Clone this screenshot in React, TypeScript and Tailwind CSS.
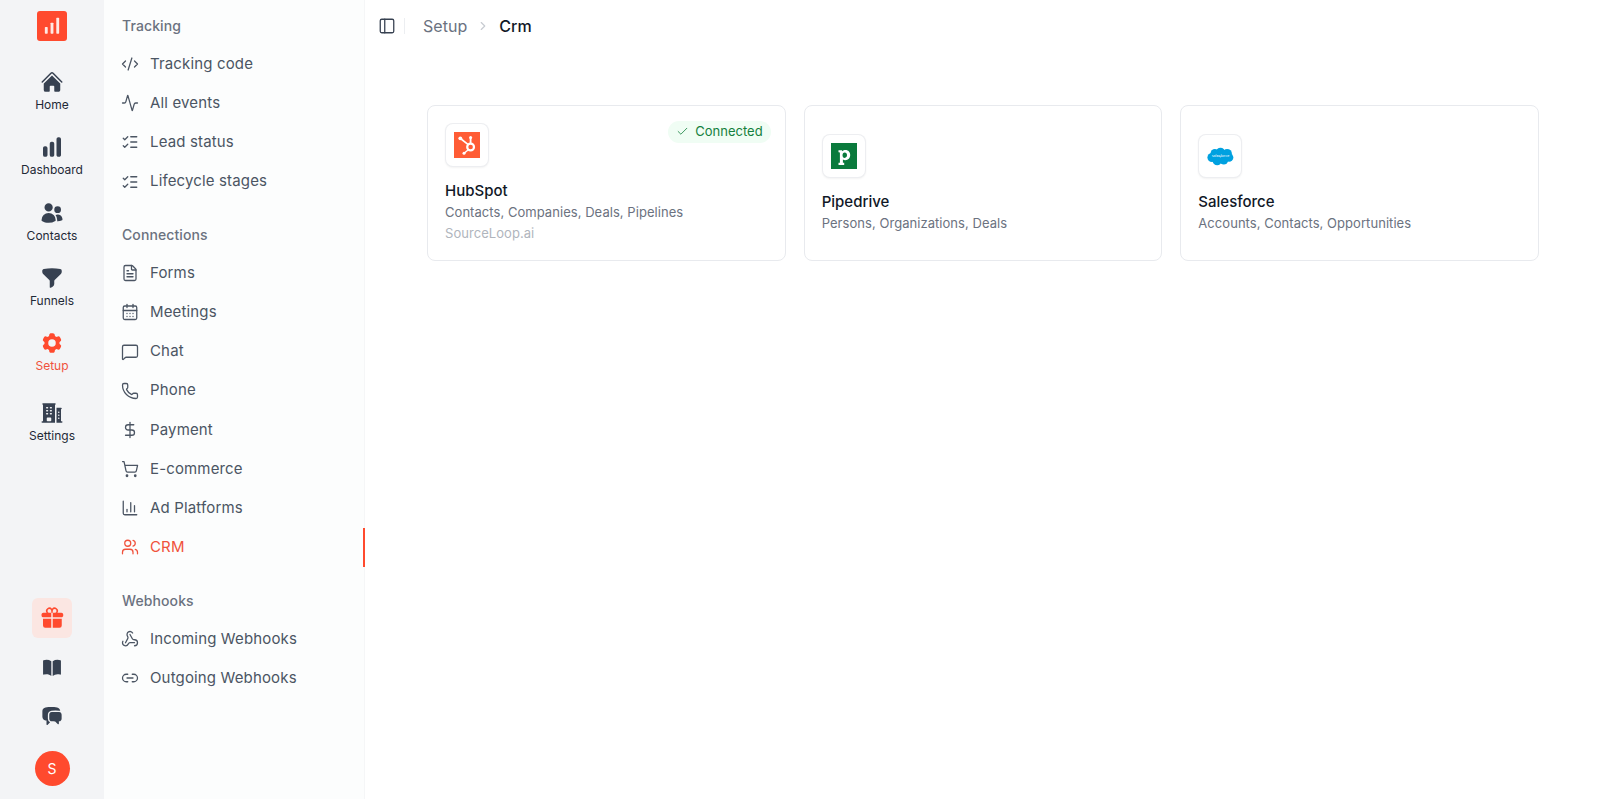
import React from "react";
import {
  CodeXml, Activity, ListChecks, FileText, CalendarDays, MessageSquare, Phone, DollarSign,
  ShoppingCart, ChartColumn, Users, Webhook, Link2, PanelLeft, ChevronRight, Check,
} from "lucide-react";
import {
  HiHome, HiChartBar, HiUsers, HiFunnel, HiCog6Tooth, HiBuildingOffice2, HiGift, HiBookOpen, HiChatBubbleLeftRight,
} from "react-icons/hi2";

const railItems = [
  { label: "Home", Icon: HiHome, cls: "h-[65.3px]" },
  { label: "Dashboard", Icon: HiChartBar, cls: "h-[65.3px]" },
  { label: "Contacts", Icon: HiUsers, cls: "h-[65.3px]" },
  { label: "Funnels", Icon: HiFunnel, cls: "h-[65.3px]" },
  { label: "Setup", Icon: HiCog6Tooth, cls: "h-[70px]", active: true },
  { label: "Settings", Icon: HiBuildingOffice2, cls: "h-[65px]" },
];

const sections = [
  { title: "Tracking", items: [
    { label: "Tracking code", Icon: CodeXml },
    { label: "All events", Icon: Activity },
    { label: "Lead status", Icon: ListChecks },
    { label: "Lifecycle stages", Icon: ListChecks },
  ]},
  { title: "Connections", items: [
    { label: "Forms", Icon: FileText },
    { label: "Meetings", Icon: CalendarDays },
    { label: "Chat", Icon: MessageSquare },
    { label: "Phone", Icon: Phone },
    { label: "Payment", Icon: DollarSign },
    { label: "E-commerce", Icon: ShoppingCart },
    { label: "Ad Platforms", Icon: ChartColumn },
    { label: "CRM", Icon: Users, active: true },
  ]},
  { title: "Webhooks", items: [
    { label: "Incoming Webhooks", Icon: Webhook },
    { label: "Outgoing Webhooks", Icon: Link2 },
  ]},
];

function HubSpotLogo() {
  return (
    <svg viewBox="0 0 26 26" className="w-[26px] h-[26px]">
      <rect width="26" height="26" fill="#ff5c35" />
      <g stroke="#fff" fill="none" strokeLinecap="round">
        <circle cx="16.6" cy="15" r="3.4" strokeWidth="2.2" />
        <path d="M6.5 6.5 L13.9 12.4" strokeWidth="1.6" />
        <path d="M16.6 11 V6.5" strokeWidth="1.8" />
        <path d="M14 18 L10.4 21" strokeWidth="1.5" />
      </g>
      <circle cx="6.3" cy="6.3" r="1.9" fill="#fff" />
      <circle cx="16.6" cy="5.6" r="1.5" fill="#fff" />
      <circle cx="10" cy="21.3" r="1.5" fill="#fff" />
    </svg>
  );
}

function PipedriveLogo() {
  return (
    <svg viewBox="0 0 26 26" className="w-[26px] h-[26px]">
      <rect width="26" height="26" fill="#0a7a3c" />
      <path fill="#fff" fillRule="evenodd" d="M7.500 7.200h3.500l.3 1.100c.8-.8 1.800-1.300 3.200-1.300 2.900 0 4.700 2.200 4.700 5.100 0 3.100-2 5.200-4.800 5.200-1 0-1.900-.3-2.500-.8v3.300h1.300V22H7.500v-2.200h1.400V9.900c0-.4-.2-.6-.6-.6h-.8V7.200Zm6.200 2.200c-1.400 0-2.200 1.100-2.200 2.800 0 1.600.8 2.700 2.200 2.700s2.300-1 2.300-2.800c0-1.700-.9-2.700-2.300-2.700Z" />
    </svg>
  );
}

function SalesforceLogo() {
  return (
    <svg viewBox="0 0 28 20" className="w-[27px] h-[19px]">
      <g fill="#00a1e0">
        <circle cx="8" cy="6.500" r="4.500" />
        <circle cx="14" cy="5.500" r="4.800" />
        <circle cx="21" cy="7" r="5" />
        <circle cx="23" cy="11" r="4.500" />
        <circle cx="5" cy="11" r="4.800" />
        <circle cx="10.500" cy="14.500" r="4.800" />
        <circle cx="17.500" cy="14" r="4.500" />
      </g>
      <text x="14" y="11" textAnchor="middle" fill="#e6f6fd" fontSize="3.800" fontFamily="Inter, sans-serif">salesforce</text>
    </svg>
  );
}

function LogoBox({ children }: { children: React.ReactNode }) {
  return (
    <div className="w-[44px] h-[44px] rounded-lg border border-gray-200/70 bg-white shadow-[0_1px_2px_rgba(0,0,0,0.05)] flex items-center justify-center">
      {children}
    </div>
  );
}

function Card({ logo, name, desc, sub, connected }: { logo: React.ReactNode; name: string; desc: string; sub?: string; connected?: boolean }) {
  return (
    <div className={`relative rounded-lg border border-[#e8eaee] bg-white h-[156px] px-[17px] flex flex-col justify-center ${sub ? "" : "pt-[2px]"}`}>
      {connected && (
        <div className="absolute top-[15px] right-[14px] h-[22px] rounded-full bg-[#f0fdf4] pl-[8px] pr-[8px] flex items-center gap-[6px] text-[13px] text-[#15803d]">
          <Check className="w-[13px] h-[13px]" strokeWidth={1.5} />
          <span>Connected</span>
        </div>
      )}
      <LogoBox>{logo}</LogoBox>
      <div className="mt-[14px] text-[15px] leading-[20px] font-medium text-[#111827]">{name}</div>
      <div className="mt-[1px] text-[13px] leading-[20px] tracking-[0.05px] text-[#6b7280]">{desc}</div>
      {sub && <div className="mt-[1px] text-[13px] leading-[20px] tracking-[0.05px] text-[#b0b5bd]">{sub}</div>}
    </div>
  );
}

export default function App() {
  return (
    <div className="flex h-screen w-full overflow-hidden bg-white font-['Inter',sans-serif]">
      <aside className="w-[104px] shrink-0 bg-[#f3f4f6] flex flex-col items-center justify-between pt-[11px] pb-[13px]">
        <div className="w-full flex flex-col items-center">
          <div className="w-[30px] h-[30px] rounded-[3px] bg-[#ff4a2e] flex items-center justify-center mb-[29px]">
            <svg viewBox="0 0 20 20" className="w-[22px] h-[22px]" fill="#ffe9e4">
              <rect x="3.500" y="11" width="2.600" height="6" rx="0.600" />
              <rect x="8.700" y="7" width="2.600" height="10" rx="0.600" />
              <rect x="13.900" y="2.500" width="2.600" height="14.500" rx="0.600" />
            </svg>
          </div>
          {railItems.map(({ label, Icon, cls, active }) => (
            <div key={label} className={`${cls} w-full flex flex-col items-center`}>
              <Icon className={`w-[24px] h-[24px] ${active ? "text-[#ff4a2e]" : "text-[#374151]"}`} />
              <span className={`mt-[1px] text-[12px] leading-[20px] ${active ? "text-[#f0523c]" : "text-[#1f2937]"}`}>{label}</span>
            </div>
          ))}
        </div>
        <div className="flex flex-col items-center">
          <div className="w-[40px] h-[40px] rounded-md bg-[#fbe6e2] flex items-center justify-center">
            <HiGift className="w-[24px] h-[24px] text-[#ff4a2e]" />
          </div>
          <HiBookOpen className="mt-[19px] w-[22px] h-[22px] text-[#374151]" />
          <HiChatBubbleLeftRight className="mt-[26px] w-[22px] h-[22px] text-[#374151]" />
          <div className="mt-[24px] w-[35px] h-[35px] rounded-full bg-[#ff4a2e] text-white text-[14px] flex items-center justify-center">S</div>
        </div>
      </aside>

      <nav className="relative w-[261px] shrink-0 bg-[#fcfdfd] border-r border-[#f5f6f7] pt-[16px]">
        {sections.map((s) => (
          <div key={s.title} className="mb-[24px]">
            <div className="pl-[18px] h-[20px] mb-[8.400px] text-[14px] leading-[20px] font-medium text-[#6b7280] tracking-[0.1px]">{s.title}</div>
            {s.items.map(({ label, Icon, active }) => (
              <div key={label} className={`relative h-[39.200px] pl-[17px] flex items-center gap-[11px] text-[15px] ${active ? "text-[#f0523c]" : "text-[#4b5563]"}`}>
                <Icon className="w-[18px] h-[18px] shrink-0" strokeWidth={1.700} />
                <span className="tracking-[0.15px]">{label}</span>
                {active && <span className="absolute right-[-1px] top-0 bottom-0 w-[2px] bg-[#ff4a2e]" />}
              </div>
            ))}
          </div>
        ))}
      </nav>

      <main className="flex-1 min-w-0">
        <header className="h-[52px] pl-[13px] flex items-center">
          <PanelLeft className="w-[18px] h-[18px] text-[#374151]" strokeWidth={1.700} />
          <span className="ml-[8px] w-px h-[16px] bg-[#eceef1]" />
          <span className="ml-[18px] text-[16px] tracking-[0.05px] text-[#6b7280]">Setup</span>
          <ChevronRight className="ml-[9px] w-[14px] h-[14px] text-[#c7cbd1]" />
          <span className="ml-[9px] text-[16px] font-medium text-[#111827]">Crm</span>
        </header>
        <div className="pt-[52.500px] pl-[62px] pr-[61px] grid grid-cols-3 gap-[18px]">
          <Card logo={<HubSpotLogo />} name="HubSpot" desc="Contacts, Companies, Deals, Pipelines" sub="SourceLoop.ai" connected />
          <Card logo={<PipedriveLogo />} name="Pipedrive" desc="Persons, Organizations, Deals" />
          <Card logo={<SalesforceLogo />} name="Salesforce" desc="Accounts, Contacts, Opportunities" />
        </div>
      </main>
    </div>
  );
}
